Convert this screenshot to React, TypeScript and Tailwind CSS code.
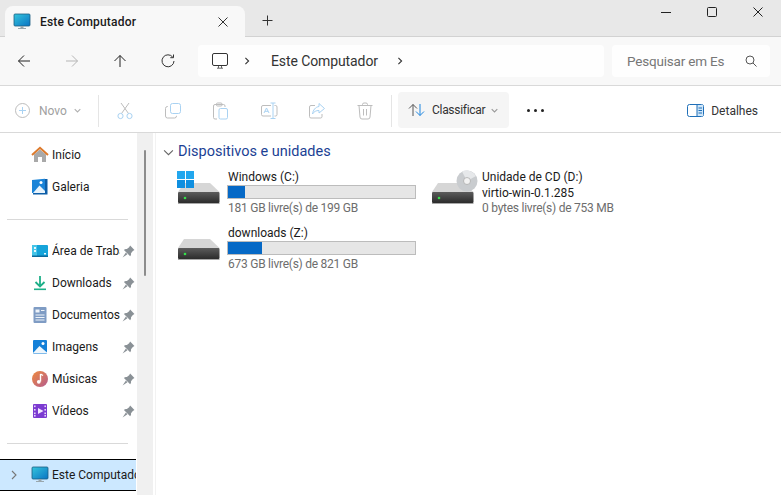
import React from "react";

const S = ({ size = 16, children, className = "" }: { size?: number; children: React.ReactNode; className?: string }) => (
  <svg width={size} height={size} viewBox={`0 0 ${size} ${size}`} fill="none" className={`shrink-0 ${className}`}>{children}</svg>
);

const Chevron = ({ dir = "right", color = "#555", size = 10 }: { dir?: "right" | "down"; color?: string; size?: number }) => (
  <S size={size}>
    {dir === "right"
      ? <path d={`M${size * 0.3} ${size * 0.1}L${size * 0.7} ${size * 0.5}L${size * 0.3} ${size * 0.9}`} stroke={color} strokeWidth="1.1" />
      : <path d={`M${size * 0.1} ${size * 0.3}L${size * 0.5} ${size * 0.7}L${size * 0.9} ${size * 0.3}`} stroke={color} strokeWidth="1.1" />}
  </S>
);

const PCIcon = ({ id }: { id: string }) => (
  <S size={18}>
    <defs>
      <linearGradient id={id} x1="0" y1="0" x2="1" y2="1">
        <stop offset="0" stopColor="#35c5dc" />
        <stop offset="1" stopColor="#0a74c4" />
      </linearGradient>
    </defs>
    <rect x="1" y="1" width="16" height="12" rx="1" fill={`url(#${id})`} stroke="#1d5d80" strokeWidth="0.8" />
    <rect x="7.5" y="13" width="3" height="2" fill="#9aa7ad" />
    <rect x="5" y="15" width="8" height="1" fill="#9aa7ad" />
  </S>
);

const Pin = () => (
  <svg width="13" height="13" viewBox="0 0 12 12" fill="none" className="shrink-0">
    <path d="M7.5 0.5L11.5 4.5L10 5.5L8.3 7.6C8.6 8.6 8.3 9.6 7.5 10.3L1.8 4.6C2.5 3.8 3.5 3.5 4.5 3.8L6.6 2Z" fill="#8a9196" />
    <path d="M3.6 7L0.5 11.5L5 8.5Z" fill="#8a9196" />
  </svg>
);

const sidebarIcons: Record<string, React.ReactNode> = {
  home: (
    <S size={18}>
      <path d="M3 8.5V16H7V11H11V16H15V8.5L9 3.5Z" fill="#a9a9a9" />
      <path d="M1 9L9 1.8L17 9" stroke="#dd7a2c" strokeWidth="2" />
    </S>
  ),
  gallery: (
    <S size={18}>
      <path d="M1 2L14 0.8V15H1Z" fill="#1a84d8" />
      <path d="M14 1H16.5V16.5H2V15H14Z" fill="#0d5ea8" />
      <path d="M2 15L8.5 7.5L14 13V15Z" fill="#e8f3fb" />
      <circle cx="10" cy="4.5" r="1.5" fill="#fff" />
    </S>
  ),
  desktop: (
    <S size={18}>
      <rect x="1" y="3" width="16" height="12" rx="1" fill="#16a4da" />
      <rect x="1" y="3" width="5" height="12" fill="#45c5e8" />
      <rect x="1" y="13.5" width="16" height="1.5" fill="#0c6a9c" />
      <rect x="3" y="5" width="2" height="2" fill="#e6f7fd" />
      <rect x="3" y="8" width="2" height="2" fill="#e6f7fd" />
      <rect x="13" y="11" width="2" height="1.5" fill="#e6f7fd" />
    </S>
  ),
  downloads: (
    <S size={18}>
      <path d="M9 2V12M4.5 8L9 12.5L13.5 8" stroke="#1eb089" strokeWidth="1.8" />
      <rect x="3" y="14.5" width="12" height="1.6" fill="#1eb089" />
    </S>
  ),
  docs: (
    <S size={18}>
      <rect x="2.5" y="1" width="13" height="16" rx="1" fill="#7f9cc4" />
      <rect x="4.5" y="3.5" width="4" height="3" fill="#eef3f9" />
      <rect x="10" y="4" width="3.5" height="1" fill="#eef3f9" />
      <rect x="4.5" y="8.5" width="9" height="1" fill="#eef3f9" />
      <rect x="4.5" y="11" width="9" height="1" fill="#eef3f9" />
      <rect x="4.5" y="13.5" width="9" height="1" fill="#eef3f9" />
    </S>
  ),
  images: (
    <S size={18}>
      <rect x="2" y="2" width="14" height="14" rx="1" fill="#1480d8" />
      <path d="M2 15L8.5 8L16 14.5V15.5H2Z" fill="#eef6fc" />
      <circle cx="12" cy="5.5" r="1.5" fill="#fff" />
    </S>
  ),
  music: (
    <S size={18}>
      <defs>
        <linearGradient id="mus" x1="0" y1="0" x2="1" y2="1">
          <stop offset="0" stopColor="#ef8a3c" />
          <stop offset="1" stopColor="#b45c90" />
        </linearGradient>
      </defs>
      <circle cx="9" cy="9" r="8" fill="url(#mus)" />
      <path d="M9.5 4V11.5" stroke="#fff" strokeWidth="1.4" />
      <circle cx="7.8" cy="11.8" r="1.9" fill="#fff" />
      <path d="M9.5 4L12 5.5" stroke="#fff" strokeWidth="1.4" />
    </S>
  ),
  videos: (
    <S size={18}>
      <rect x="2" y="2" width="14" height="14" rx="1" fill="#7c3bd1" />
      <path d="M7 6L12.5 9L7 12Z" fill="#f3e8ff" />
      {[3.5, 7, 10.5, 13].map((y) => (
        <React.Fragment key={y}>
          <rect x="3" y={y} width="1.6" height="1.6" fill="#e5d4fb" />
          <rect x="13.4" y={y} width="1.6" height="1.6" fill="#e5d4fb" />
        </React.Fragment>
      ))}
    </S>
  ),
};

const NavItem = ({ icon, label, pinned }: { icon: string; label: string; pinned?: boolean }) => (
  <div className="h-8 flex items-center pl-[31px] text-[12px] text-[#1a1a1a]">
    {sidebarIcons[icon]}
    <div className="ml-[3px] w-[68px] whitespace-nowrap overflow-hidden">{label}</div>
    {pinned && <div className="ml-[2px]"><Pin /></div>}
  </div>
);

const Divider = () => (
  <div className="h-8 flex items-center pl-[7px]">
    <div className="w-[121px] h-px bg-[#d9d9d9]" />
  </div>
);

const Sidebar = () => (
  <div className="w-[137px] shrink-0 pt-[6px] overflow-hidden">
    <NavItem icon="home" label="Início" />
    <NavItem icon="gallery" label="Galeria" />
    <Divider />
    <NavItem icon="desktop" label="Área de Trabalho" pinned />
    <NavItem icon="downloads" label="Downloads" pinned />
    <NavItem icon="docs" label="Documentos" pinned />
    <NavItem icon="images" label="Imagens" pinned />
    <NavItem icon="music" label="Músicas" pinned />
    <NavItem icon="videos" label="Vídeos" pinned />
    <Divider />
    <div className="h-8 w-[136px] flex items-center bg-[#cce8ff] border-y border-black text-[12px] text-[#1a1a1a] overflow-hidden">
      <div className="w-[31px] shrink-0 pl-[9px]"><Chevron color="#777" /></div>
      <PCIcon id="pc2" />
      <div className="ml-[3px] whitespace-nowrap">Este Computador</div>
    </div>
  </div>
);

const Drive = ({ gid }: { gid: string }) => (
  <svg width="44" height="38" viewBox="0 0 44 38" fill="none" className="shrink-0">
    <defs>
      <linearGradient id={gid} x1="0" y1="0" x2="0" y2="1">
        <stop offset="0" stopColor="#5c5c5c" />
        <stop offset="1" stopColor="#2b2b2b" />
      </linearGradient>
    </defs>
    <path d="M7 16H33L42.5 25H1Z" fill="#d6d6d6" />
    <rect x="1" y="25" width="41.5" height="11" rx="1" fill={`url(#${gid})`} />
    <rect x="1" y="36" width="41.5" height="1" fill="#a8a8a8" />
    <circle cx="8" cy="31" r="1.3" fill="#35e04a" />
  </svg>
);

const DriveBox = ({ kind, gid }: { kind: "win" | "cd" | "none"; gid: string }) => (
  <div className="relative w-[50px] h-[38px] shrink-0">
    <Drive gid={gid} />
    {kind === "win" && (
      <svg width="17" height="17" viewBox="0 0 17 17" className="absolute left-0 top-[4px]">
        <rect width="8" height="8" fill="#22a7ee" />
        <rect x="9" width="8" height="8" fill="#22a7ee" />
        <rect y="9" width="8" height="8" fill="#0f8fe0" />
        <rect x="9" y="9" width="8" height="8" fill="#0f8fe0" />
      </svg>
    )}
    {kind === "cd" && (
      <svg width="22" height="22" viewBox="0 0 22 22" className="absolute left-[25px] top-[3px]">
        <circle cx="11" cy="11" r="10.5" fill="#c9cccf" />
        <path d="M11 11L6 1.5A10.5 10.5 0 0 1 20 6Z" fill="#e6e8ea" />
        <circle cx="11" cy="11" r="3.5" fill="#f2f2f2" stroke="#a5a5a5" strokeWidth="0.7" />
      </svg>
    )}
  </div>
);

const Tile = ({ kind, gid, name, name2, detail, pct }: { kind: "win" | "cd" | "none"; gid: string; name: string; name2?: string; detail: string; pct?: number }) => (
  <div className="flex items-start h-14">
    <DriveBox kind={kind} gid={gid} />
    <div className="text-[12px] leading-[16px] whitespace-nowrap pt-[2px]">
      <div className="text-[#1a1a1a] pl-px h-[16px]">{name}</div>
      {pct !== undefined ? (
        <div className="w-[189px] h-[14px] border border-[#bcbcbc] bg-[#e6e6e6]">
          <div className="h-full bg-[#0669c6]" style={{ width: `${pct}%` }} />
        </div>
      ) : (
        <div className="text-[#1a1a1a] pl-px h-[14px]">{name2}</div>
      )}
      <div className="text-[#6d6d6d] pl-px pt-px tracking-[-0.25px]">{detail}</div>
    </div>
  </div>
);

const G = "#bdbdbd";
const B = "#a9d2f2";
const toolIcons: React.ReactNode[] = [
  <S size={18} key="cut">
    <path d="M5 1L12.5 11.5M13 1L5.5 11.5" stroke={G} />
    <circle cx="4.5" cy="14" r="2.6" stroke={B} />
    <circle cx="13.5" cy="14" r="2.6" stroke={B} />
  </S>,
  <S size={18} key="copy">
    <rect x="6.5" y="1.5" width="10" height="10" rx="2" stroke={B} />
    <path d="M4 4.5H3.5A2 2 0 0 0 1.5 6.5V14A2 2 0 0 0 3.5 16H10.5A2 2 0 0 0 12.5 14V13.8" stroke={G} />
  </S>,
  <S size={18} key="paste">
    <path d="M5 17H3A1.5 1.5 0 0 1 1.5 15.5V4A1.5 1.5 0 0 1 3 2.5H11.5A1.5 1.5 0 0 1 13 4V5" stroke={G} />
    <rect x="4.5" y="1" width="5.5" height="3" rx="1" stroke={G} />
    <rect x="7" y="6.5" width="8.5" height="10.5" rx="1.5" stroke={B} />
  </S>,
  <S size={18} key="ren">
    <path d="M11 3.5H3A1.5 1.5 0 0 0 1.5 5V12.5A1.5 1.5 0 0 0 3 14H11M14.5 3.5H15.5A1.5 1.5 0 0 1 17 5V12.5A1.5 1.5 0 0 1 15.5 14H14.5" stroke={G} />
    <path d="M10.5 1H15.5M13 1V16.5M10.5 16.5H15.5" stroke={B} />
    <path d="M4 11L6.5 6L9 11M5 9.3H8" stroke={B} />
  </S>,
  <S size={18} key="share">
    <path d="M7 3.5H3A1.5 1.5 0 0 0 1.5 5V14.5A1.5 1.5 0 0 0 3 16H12.5A1.5 1.5 0 0 0 14 14.5V12" stroke={G} />
    <path d="M11 1.5L16.5 6.5L11 11V8.5C8 8.5 6 9.5 4.5 12C5 8 7.5 5 11 4.5Z" stroke={B} />
  </S>,
  <S size={18} key="del">
    <path d="M1.5 3.5H16.5M6.5 3.5V2.5A1.5 1.5 0 0 1 8 1H10A1.5 1.5 0 0 1 11.5 2.5V3.5" stroke={G} />
    <path d="M3 3.5L4 15A2 2 0 0 0 6 17H12A2 2 0 0 0 14 15L15 3.5M7.5 7V13.5M10.5 7V13.5" stroke={G} />
  </S>,
];

const Nav = ({ children }: { children: React.ReactNode }) => (
  <div className="w-12 h-8 flex items-center justify-center">{children}</div>
);

export default function App() {
  return (
    <div className="w-[781px] h-[495px] flex flex-col overflow-hidden bg-white font-['Roboto','Noto_Sans',sans-serif] relative">
      {/* title bar */}
      <div className="h-[37px] shrink-0 bg-[#e8e8e8] border-b border-[#d2d2d2] flex items-end pl-[5px]">
        <div className="w-[240px] h-[31px] -mb-px bg-[#f8f8f8] rounded-t-lg flex items-center pl-[8px] pr-[17px]">
          <PCIcon id="pc1" />
          <span className="ml-[9px] text-[12px] font-medium text-[#1a1a1a] pt-px tracking-[0.2px]">Este Computador</span>
          <svg width="10" height="10" viewBox="0 0 10 10" className="ml-auto"><path d="M0.5 0.5L9.5 9.5M9.5 0.5L0.5 9.5" stroke="#333" /></svg>
        </div>
        <div className="ml-[17px] h-[31px] flex items-center">
          <svg width="11" height="11" viewBox="0 0 11 11"><path d="M5.5 0.5V10.5M0.5 5.5H10.5" stroke="#333" /></svg>
        </div>
        <div className="ml-auto self-start flex">
          <div className="w-[46px] h-6 flex items-center justify-center"><div className="w-[10px] h-px bg-[#222]" /></div>
          <div className="w-[46px] h-6 flex items-center justify-center"><div className="w-[10px] h-[10px] border border-[#222] rounded-[1.5px]" /></div>
          <div className="w-[46px] h-6 flex items-center justify-center">
            <svg width="10" height="10" viewBox="0 0 10 10"><path d="M0.5 0.5L9.5 9.5M9.5 0.5L0.5 9.5" stroke="#222" /></svg>
          </div>
        </div>
      </div>

      {/* nav row */}
      <div className="h-[49px] shrink-0 bg-[#f8f8f8] border-b border-[#d9d9d9] flex items-center">
        <Nav>
          <svg width="14" height="14" viewBox="0 0 14 14" fill="none"><path d="M13 7H1.5M7 1.5L1.5 7L7 12.5" stroke="#222" /></svg>
        </Nav>
        <Nav>
          <svg width="14" height="14" viewBox="0 0 14 14" fill="none"><path d="M1 7H12.5M7 1.5L12.5 7L7 12.5" stroke="#b5b5b5" /></svg>
        </Nav>
        <Nav>
          <svg width="14" height="14" viewBox="0 0 14 14" fill="none"><path d="M7 13V1.5M1.5 7L7 1.5L12.5 7" stroke="#222" /></svg>
        </Nav>
        <Nav>
          <svg width="14" height="14" viewBox="0 0 14 14" fill="none"><path d="M11.8 3.2A6 6 0 1 0 13 7M12.5 0.5V3.7H9.3" stroke="#333" /></svg>
        </Nav>
        <div className="ml-[6px] w-[406px] h-8 bg-[#fefefe] rounded flex items-center pl-[14px]">
          <svg width="16" height="16" viewBox="0 0 16 16" fill="none">
            <rect x="0.5" y="0.5" width="15" height="12" rx="1.5" stroke="#333" />
            <path d="M5 15.2H11M6.5 13V15M9.5 13V15" stroke="#666" />
          </svg>
          <div className="ml-[15px]"><Chevron color="#333" size={8} /></div>
          <span className="ml-[20px] text-[14px] text-[#333] tracking-[-0.1px]">Este Computador</span>
          <div className="ml-[18px]"><Chevron color="#333" size={8} /></div>
        </div>
        <div className="ml-[8px] w-[158px] h-8 bg-[#fefefe] rounded flex items-center pl-[15px] pr-[13px]">
          <span className="text-[13.5px] text-[#777] whitespace-nowrap tracking-[-0.2px]">Pesquisar em Es</span>
          <svg width="12" height="12" viewBox="0 0 12 12" fill="none" className="ml-auto">
            <circle cx="5" cy="5" r="4" stroke="#555" />
            <path d="M8 8L11.5 11.5" stroke="#555" />
          </svg>
        </div>
      </div>

      {/* toolbar */}
      <div className="h-[47px] shrink-0 border-b border-[#d9d9d9] flex items-center bg-white pt-[3px]">
        <div className="w-[98px] flex items-center pl-[15px]">
          <svg width="15" height="15" viewBox="0 0 15 15" fill="none" className="shrink-0">
            <circle cx="7.5" cy="7.5" r="7" stroke="#bdbdbd" />
            <path d="M7.5 4V11M4 7.5H11" stroke="#a9d2f2" />
          </svg>
          <span className="ml-[9px] text-[12px] text-[#a0a0a0]">Novo</span>
          <div className="ml-[7px]"><Chevron dir="down" color="#b0b0b0" size={7} /></div>
        </div>
        <div className="w-px h-8 bg-[#e5e5e5]" />
        <div className="flex ml-[2px]">
          {toolIcons.map((icon, i) => (
            <div key={i} className="w-12 h-9 flex items-center justify-center">{icon}</div>
          ))}
        </div>
        <div className="ml-[2px] w-px h-8 bg-[#e5e5e5]" />
        <div className="ml-[6px] w-[111px] h-9 -mt-[1px] bg-[#f5f5f5] rounded flex items-center pl-[10px]">
          <svg width="17" height="14" viewBox="0 0 17 14" fill="none" className="shrink-0">
            <path d="M5 13V1.5M1 5.5L5 1.5L9 5.5" stroke="#555" />
            <path d="M12 1V12.5M8 8.5L12 12.5L16 8.5" stroke="#1d86e0" />
          </svg>
          <span className="ml-[7px] text-[12px] text-[#333] whitespace-nowrap tracking-[-0.3px]">Classificar</span>
          <div className="ml-[6px]"><Chevron dir="down" color="#999" size={7} /></div>
        </div>
        <div className="w-[52px] flex justify-center gap-[4px]">
          <div className="w-[3px] h-[3px] rounded-full bg-[#222]" />
          <div className="w-[3px] h-[3px] rounded-full bg-[#222]" />
          <div className="w-[3px] h-[3px] rounded-full bg-[#222]" />
        </div>
        <div className="ml-auto flex items-center pr-[23px]">
          <svg width="17" height="13" viewBox="0 0 17 13" fill="none" className="shrink-0">
            <rect x="0.5" y="0.5" width="16" height="12" rx="2" stroke="#1f6fb8" />
            <rect x="10" y="1" width="6" height="11" fill="#cfe6f9" />
            <path d="M10 1V12" stroke="#1f6fb8" />
            <path d="M11.5 4H15M11.5 6.5H15M11.5 9H15" stroke="#1f6fb8" />
          </svg>
          <span className="ml-[7px] text-[12px] text-[#333]">Detalhes</span>
        </div>
      </div>

      {/* body */}
      <div className="flex-1 flex min-h-0">
        <Sidebar />
        <div className="w-4 shrink-0 bg-[#f0f0f0] flex justify-center relative">
          <div className="absolute left-[7px] top-[17px] w-[2px] h-[126px] bg-[#8c8c8c] rounded-full" />
        </div>
        <div className="w-[2px] shrink-0" />
        <div className="flex-1 border-l border-[#f2f2f2] pl-[7px] pt-[9px] min-w-0">
          <div className="flex items-center h-[20px]">
            <Chevron dir="down" color="#666" size={11} />
            <span className="ml-[4px] text-[14.5px] text-[#1c3f94] whitespace-nowrap">Dispositivos e unidades</span>
          </div>
          <div className="grid grid-cols-[254px_255px] pl-[14px] pt-[5px]">
            <Tile kind="win" gid="d1" name="Windows (C:)" pct={9} detail="181 GB livre(s) de 199 GB" />
            <Tile kind="cd" gid="d2" name="Unidade de CD (D:)" name2="virtio-win-0.1.285" detail="0 bytes livre(s) de 753 MB" />
            <Tile kind="none" gid="d3" name="downloads (Z:)" pct={18} detail="673 GB livre(s) de 821 GB" />
          </div>
        </div>
      </div>
    </div>
  );
}
